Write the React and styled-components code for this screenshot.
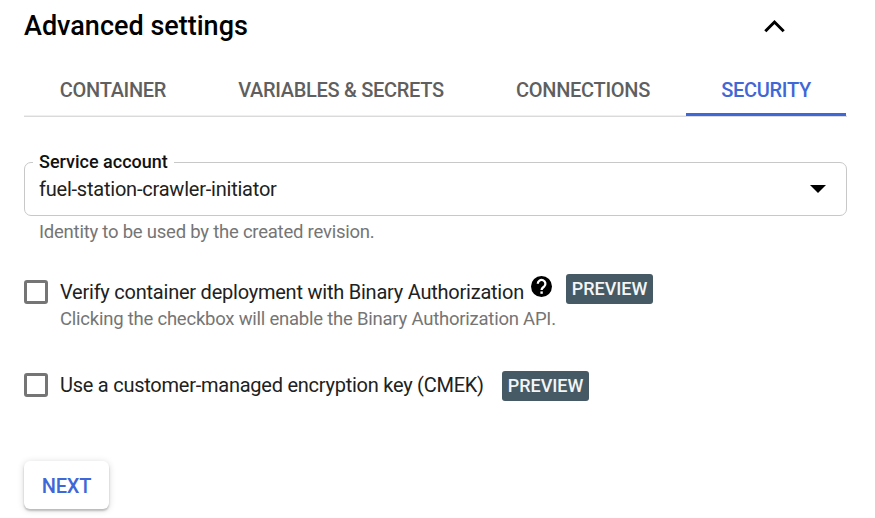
import React from 'react';
import styled, { createGlobalStyle } from 'styled-components';

const Global = createGlobalStyle`
  * { box-sizing: border-box; }
  body { margin: 0; background: #fff; font-family: Roboto, sans-serif; color: #212121; }
`;
const Panel = styled.main`
  width: 875px; height: 518px; padding: 0 28px 0 24px; overflow: hidden;
  display: flex; flex-direction: column; align-items: flex-start;
`;
const Header = styled.header`
  width: 100%; height: 52px; padding-right: 61px;
  display: flex; align-items: center; justify-content: space-between;
`;
const Title = styled.h2`
  margin: 0; font-size: 27px; font-weight: 500; line-height: 32px; color: #000; white-space: nowrap;
`;
const Tabs = styled.nav`
  width: 823px; height: 65px; padding-top: 12px; display: flex;
  border-bottom: 1px solid #dadada; box-shadow: inset 0 -1px #efefef;
`;
const Tab = styled.button`
  height: 52px; width: ${p => p.$width}px; padding: 0; border: 0; background: none;
  border-bottom: 3px solid ${p => (p.$active ? '#3f67d6' : 'transparent')};
  color: ${p => (p.$active ? '#3f67d6' : '#5f5f5f')};
  font: 500 20px/52px Roboto, sans-serif; letter-spacing: -0.3px; white-space: nowrap;
`;
const Select = styled.fieldset`
  width: 823px; height: 64px; margin: 35px 0 0; padding: 0 20px 0 14px;
  border: 1px solid #c8c8c8; border-radius: 7px; min-width: 0;
`;
const Legend = styled.legend`
  padding: 0 6px; margin-left: -6px; font-size: 18px; line-height: 20px; font-weight: 500; color: #111;
`;
const Value = styled.div`
  height: 34px; display: flex; align-items: center; justify-content: space-between;
  font-size: 20px; letter-spacing: -0.22px;
`;
const Hint = styled.p`
  margin: ${p => p.$top || 0}px 0 0 ${p => p.$indent}px;
  font-size: 18.5px; line-height: 24px; letter-spacing: -0.23px; color: #757575; white-space: nowrap;
`;
const Option = styled.label`
  height: 30px; margin-top: ${p => p.$top}px; display: flex; align-items: center;
`;
const Checkbox = styled.span`
  width: 24px; height: 24px; margin-right: 12px; border: 3px solid #757575; border-radius: 3px;
`;
const Label = styled.span`
  width: ${p => p.$width}px; font-size: 20px; letter-spacing: ${p => p.$tracking}px; white-space: nowrap;
`;
const HelpIcon = styled.svg`
  width: 21px; height: 21px; margin: 0 14px 11px 7px; flex: none;
`;
const Badge = styled.span`
  width: 87px; height: 30px; margin-bottom: ${p => p.$raise || 0}px; border-radius: 3px; background: #455a64;
  color: #f4f5f6; font-size: 18px; font-weight: 500; line-height: 30px; text-align: center;
`;
const Next = styled.button`
  width: 85px; height: 48px; margin-top: 61px; padding: 1px 0 0; border: 0; border-radius: 6px; background: #fff;
  box-shadow: 0 2px 2px rgba(0,0,0,.2), 0 1px 7px rgba(0,0,0,.16);
  color: #3f67d6; font: 500 20px/48px Roboto, sans-serif; letter-spacing: -0.2px;
`;

export default function App() {
  return (
    <Panel>
      <Global />
      <Header>
        <Title>Advanced settings</Title>
        <svg width="22" height="14" viewBox="0 0 22 14"><path d="M1.3 12.2 10.5 3l9.2 9.2" fill="none" stroke="#000" strokeWidth="3" /></svg>
      </Header>
      <Tabs>
        <Tab $width={178}>CONTAINER</Tab>
        <Tab $width={278}>VARIABLES &amp; SECRETS</Tab>
        <Tab $width={206}>CONNECTIONS</Tab>
        <Tab $width={160} $active>SECURITY</Tab>
      </Tabs>
      <Select>
        <Legend>Service account</Legend>
        <Value>fuel-station-crawler-initiator<svg width="16" height="8"><path d="M0 0h16L8 8z" /></svg></Value>
      </Select>
      <Hint $indent={15} $top={4}>Identity to be used by the created revision.</Hint>
      <Option $top={33}>
        <Checkbox />
        <Label $width={464} $tracking={-0.23}>Verify container deployment with Binary Authorization</Label>
        <HelpIcon viewBox="0 0 21 21">
          <circle cx="10.5" cy="10.5" r="10.5" />
          <path d="M6.8 7.8a3.8 3.8 0 1 1 6.4 2.7c-1.3 1.2-2.6 1.6-2.6 3.4" fill="none" stroke="#fff" strokeWidth="2.3" />
          <path d="M9.4 15.4h2.4v2.4H9.4z" fill="#fff" />
        </HelpIcon>
        <Badge $raise={6}>PREVIEW</Badge>
      </Option>
      <Hint $indent={36}>Clicking the checkbox will enable the Binary Authorization API.</Hint>
      <Option $top={39}>
        <Checkbox />
        <Label $width={442} $tracking={-0.25}>Use a customer-managed encryption key (CMEK)</Label>
        <Badge $raise={-2}>PREVIEW</Badge>
      </Option>
      <Next>NEXT</Next>
    </Panel>
  );
}
